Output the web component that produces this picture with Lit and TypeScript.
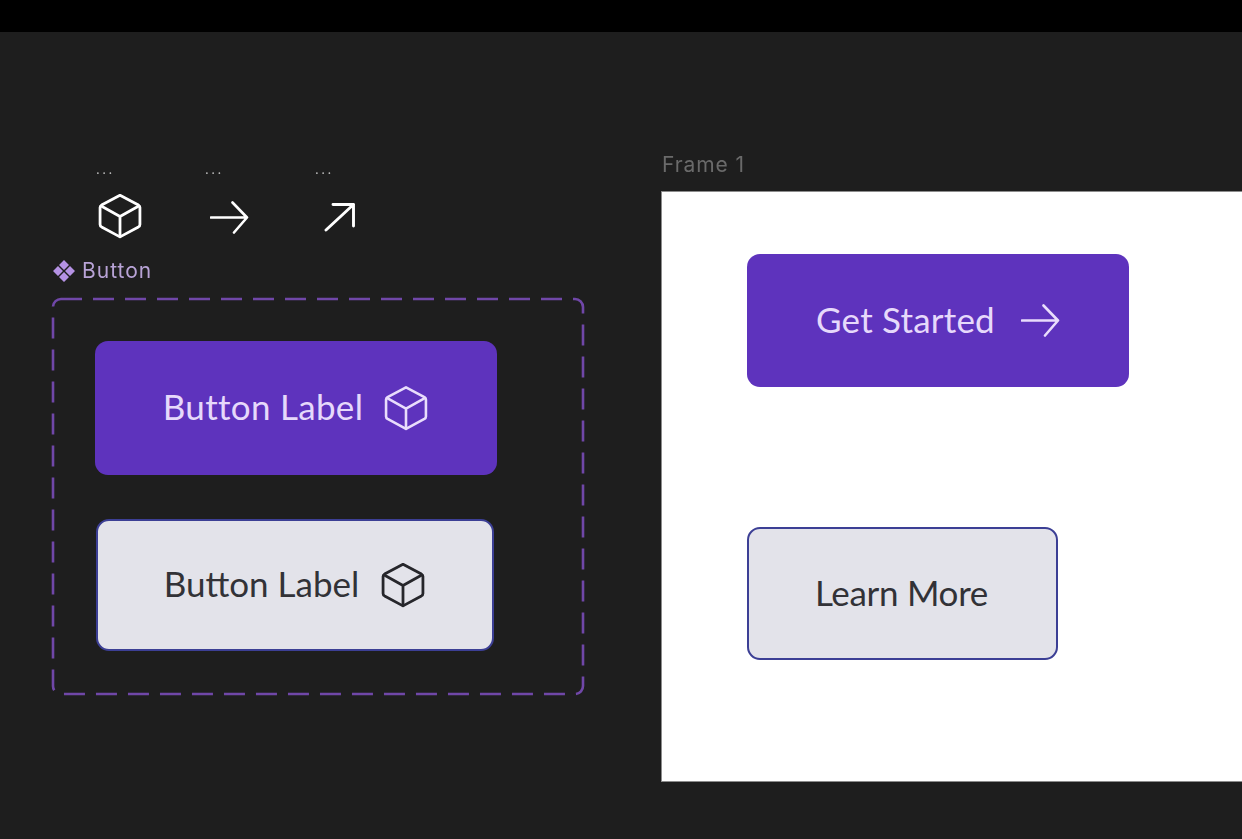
import { LitElement, html, css, svg } from "lit";
import { customElement } from "lit/decorators.js";

const cube = svg`<path d="M12 1.2 21.6 6.3Q22.400 6.800 22.400 7.600V16.400Q22.400 17.200 21.600 17.700L12 22.900 2.400 17.700Q1.600 17.200 1.600 16.400V7.600Q1.600 6.800 2.400 6.300Z" /><path d="M2.200 6.800 12 12.300 21.800 6.800M12 12.300V22.800" />`;
const arrowPath = svg`<path d="M1 16.500h36M22.500 1.500 37 16.500 24 31.500" />`;

@customElement("app-root")
export class AppRoot extends LitElement {
  static styles = css`
    :host { display: block; width: 1242px; height: 839px; overflow: hidden; }
    .page { display: flex; flex-direction: column; width: 1242px; height: 839px; background: #1e1e1e; }
    .topbar { height: 32px; flex: none; background: #000; }
    .canvas { position: relative; flex: 1; font-family: Lato, "Noto Sans", sans-serif; filter: blur(0.4px); }
    .node { position: absolute; }
    .dots { font: 400 13px/14px Inter, sans-serif; color: #c4c4c4; letter-spacing: 2.5px; }
    .icon { display: block; fill: none; stroke-linecap: round; stroke-linejoin: round; }
    .ic-white { stroke: #fff; stroke-width: 1.45; }
    .ic-arrow { stroke-width: 2.6; }
    .ic-diag { stroke-width: 2.9; }
    .comp-label { display: flex; align-items: center; gap: 7px; font: 400 21px/24px Inter, sans-serif; letter-spacing: 1px; color: #b8a3d6; }
    .diamond { fill: #b592e4; stroke: none; }
    .dashed { display: block; overflow: visible; fill: none; stroke: #7047a8; stroke-width: 2.6; stroke-dasharray: 21 11; }
    .btn { display: flex; align-items: center; justify-content: center; box-sizing: border-box; font-size: 35px; line-height: 40px; }
    .btn span { margin-top: -4px; }
    .primary { background: #5e33bd; color: #e6d9fb; border-radius: 13px; }
    .primary .icon { stroke: #e9ddfc; stroke-width: 1.35; }
    .secondary { background: #e3e3ea; color: #323237; border: 2px solid #3c3f95; border-radius: 13px; }
    .secondary .icon { stroke: #26262b; stroke-width: 1.45; }
    .frame-title { font: 400 21px/24px Inter, sans-serif; letter-spacing: 0.9px; color: #6a6a6a; }
    .frame { background: #fff; box-shadow: 0 0 0 1px #8c8c8c; }
    .dots1 { left: 96px; top: 130px; }
    .dots2 { left: 205px; top: 130px; }
    .dots3 { left: 315px; top: 130px; }
    .i1 { left: 97px; top: 161px; }
    .i2 { left: 210px; top: 169px; }
    .i3 { left: 324px; top: 170px; }
    .comp { left: 53px; top: 227px; }
    .dash-box { left: 53px; top: 267px; }
    .b1 { left: 95px; top: 309px; width: 402px; height: 134px; gap: 20px; }
    .b1 span { letter-spacing: 0.3px; }
    .b2 { left: 96px; top: 487px; width: 398px; height: 132px; gap: 21px; }
    .ftitle { left: 662px; top: 121px; }
    .frame { left: 662px; top: 160px; width: 581px; height: 589px; }
    .b3 { left: 747px; top: 222px; width: 382px; height: 133px; gap: 26px; }
    .b3 span { letter-spacing: 0.2px; }
    .b3 .icon { stroke-width: 2.6; }
    .b4 { left: 747px; top: 495px; width: 311px; height: 133px; padding-right: 2px; }
    .b4 span { letter-spacing: -0.3px; }
  `;

  private cubeIcon() {
    return html`<svg class="icon" width="46" height="46" viewBox="0 0 24 24">${cube}</svg>`;
  }

  render() {
    return html`
      <div class="page">
        <div class="topbar"></div>
        <div class="canvas">
          <div class="node dots dots1">...</div>
          <div class="node dots dots2">...</div>
          <div class="node dots dots3">...</div>
          <svg class="node icon ic-white i1" width="46" height="46" viewBox="0 0 24 24">${cube}</svg>
          <svg class="node icon ic-white ic-arrow i2" width="39" height="33" viewBox="0 0 39 33">${arrowPath}</svg>
          <svg class="node icon ic-white ic-diag i3" width="32" height="30" viewBox="0 0 32 30"><path d="M2 28 29.500 2.500M9 2.500h20.500V24" /></svg>
          <div class="node comp comp-label">
            <svg width="22" height="22" viewBox="0 0 22 22"><g class="diamond"><path d="M11 0l5 5-5 5-5-5zM11 12l5 5-5 5-5-5zM5 6l5 5-5 5-5-5zM17 6l5 5-5 5-5-5z"/></g></svg>
            <span>Button</span>
          </div>
          <svg class="node dashed dash-box" width="530" height="395" viewBox="0 0 530 395"><rect x="0" y="0" width="530" height="395" rx="8"/></svg>
          <div class="node btn primary b1"><span>Button Label</span>${this.cubeIcon()}</div>
          <div class="node btn secondary b2"><span>Button Label</span>${this.cubeIcon()}</div>
          <div class="node frame-title ftitle">Frame 1</div>
          <div class="node frame"></div>
          <div class="node btn primary b3"><span>Get Started</span><svg class="icon" width="39" height="33" viewBox="0 0 39 33">${arrowPath}</svg></div>
          <div class="node btn secondary b4"><span>Learn More</span></div>
        </div>
      </div>
    `;
  }
}
